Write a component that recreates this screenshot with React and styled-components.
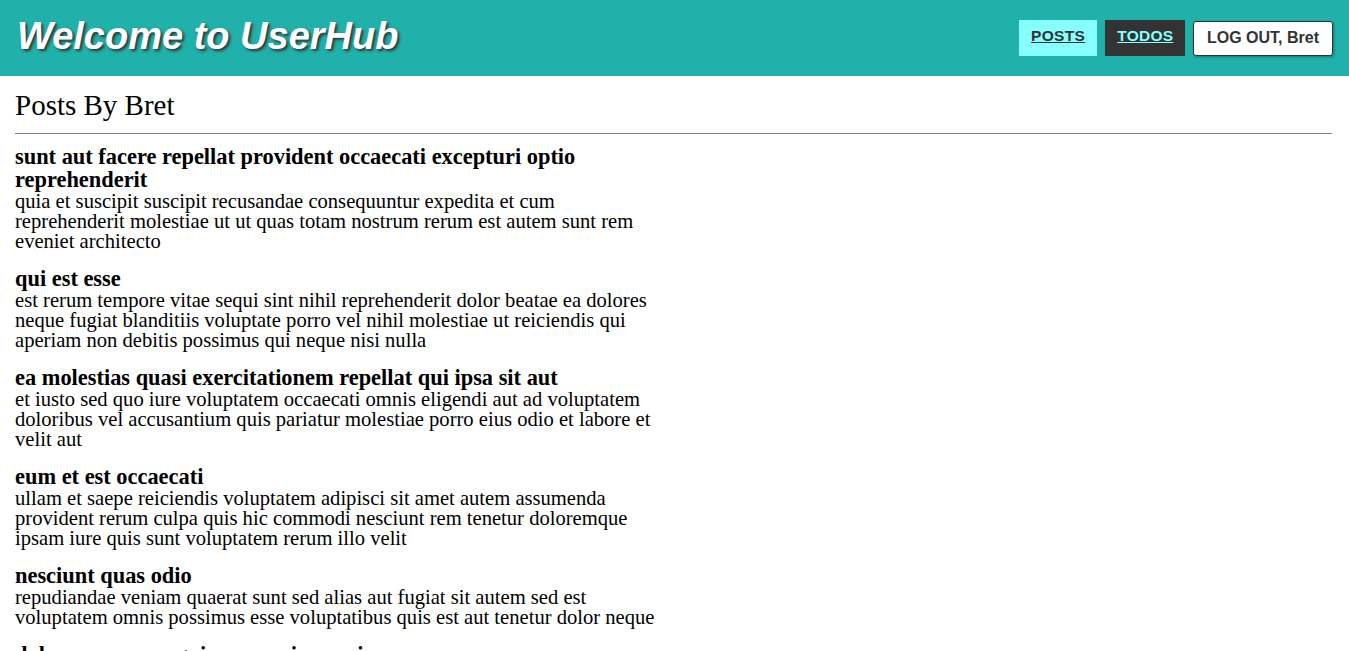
import React from "react";
import styled, { createGlobalStyle } from "styled-components";

const Global = createGlobalStyle`
  html, body { margin: 0; padding: 0; background: #fff; }
  body { font-family: "Liberation Serif", "Times New Roman", serif; color: #000; }
`;

const Header = styled.header`
  height: 76px;
  background: #20b2aa;
  display: flex;
  align-items: center;
  justify-content: space-between;
  padding: 0 16.5px 0 17px;
  box-sizing: border-box;
`;

const Brand = styled.h1`
  margin: 0;
  font-family: "Liberation Sans", Arial, sans-serif;
  font-style: italic;
  font-weight: bold;
  font-size: 38px;
  color: #fff;
  text-shadow: 2px 2px 3px #333;
  margin-top: -3px;
`;

const Nav = styled.nav`
  display: flex;
  align-items: center;
  gap: 8px;
`;

const NavLink = styled.a`
  display: flex;
  align-items: center;
  justify-content: center;
  height: 36px;
  padding: 0 12px 4px;
  box-sizing: border-box;
  font-family: "Liberation Sans", Arial, sans-serif;
  font-weight: bold;
  font-size: 15.5px;
  letter-spacing: 0.3px;
  text-decoration: underline;
  background: ${(p) => (p.$active ? "#88ffff" : "#333333")};
  color: ${(p) => (p.$active ? "#333333" : "#88ffff")};
  cursor: pointer;
`;

const LogoutButton = styled.button`
  height: 35px;
  padding: 0 12.5px;
  background: #fff;
  border: 1px solid #333;
  border-radius: 3px;
  box-shadow: 1px 1px 3px rgba(0, 0, 0, 0.35);
  font-family: "Liberation Sans", Arial, sans-serif;
  font-weight: bold;
  font-size: 16px;
  color: #333;
  cursor: pointer;
`;

const Main = styled.main`
  padding: 0 17px 0 15px;
`;

const PageTitle = styled.h2`
  margin: 0;
  padding-top: 12px;
  font-size: 29px;
  font-weight: normal;
  line-height: 34px;
  padding-bottom: 11px;
  border-bottom: 1px solid #808080;
  margin-bottom: 11px;
`;

const PostList = styled.div`
  width: 50%;
  max-width: 640px;
  display: flex;
  flex-direction: column;
  gap: 16px;
`;

const Post = styled.article``;

const PostTitle = styled.h3`
  margin: 0;
  font-size: 22.4px;
  font-weight: bold;
  line-height: 23px;
`;

const PostBody = styled.p`
  margin: 0;
  font-size: 20.6px;
  line-height: 20px;
`;

const posts = [
  {
    title: "sunt aut facere repellat provident occaecati excepturi optio reprehenderit",
    body: "quia et suscipit suscipit recusandae consequuntur expedita et cum reprehenderit molestiae ut ut quas totam nostrum rerum est autem sunt rem eveniet architecto",
  },
  {
    title: "qui est esse",
    body: "est rerum tempore vitae sequi sint nihil reprehenderit dolor beatae ea dolores neque fugiat blanditiis voluptate porro vel nihil molestiae ut reiciendis qui aperiam non debitis possimus qui neque nisi nulla",
  },
  {
    title: "ea molestias quasi exercitationem repellat qui ipsa sit aut",
    body: "et iusto sed quo iure voluptatem occaecati omnis eligendi aut ad voluptatem doloribus vel accusantium quis pariatur molestiae porro eius odio et labore et velit aut",
  },
  {
    title: "eum et est occaecati",
    body: "ullam et saepe reiciendis voluptatem adipisci sit amet autem assumenda provident rerum culpa quis hic commodi nesciunt rem tenetur doloremque ipsam iure quis sunt voluptatem rerum illo velit",
  },
  {
    title: "nesciunt quas odio",
    body: "repudiandae veniam quaerat sunt sed alias aut fugiat sit autem sed est voluptatem omnis possimus esse voluptatibus quis est aut tenetur dolor neque",
  },
  {
    title: "dolorem eum magni eos aperiam quia",
    body: "ut aspernatur corporis harum nihil quis provident sequi mollitia nobis aliquid molestiae perspiciatis et ea nemo ab reprehenderit accusantium quas voluptate dolores velit et doloremque molestiae",
  },
];

export default function App() {
  return (
    <>
      <Global />
      <Header>
        <Brand>Welcome to UserHub</Brand>
        <Nav>
          <NavLink $active>POSTS</NavLink>
          <NavLink>TODOS</NavLink>
          <LogoutButton>LOG OUT, Bret</LogoutButton>
        </Nav>
      </Header>
      <Main>
        <PageTitle>Posts By Bret</PageTitle>
        <PostList>
          {posts.map((p) => (
            <Post key={p.title}>
              <PostTitle>{p.title}</PostTitle>
              <PostBody>{p.body}</PostBody>
            </Post>
          ))}
        </PostList>
      </Main>
    </>
  );
}
